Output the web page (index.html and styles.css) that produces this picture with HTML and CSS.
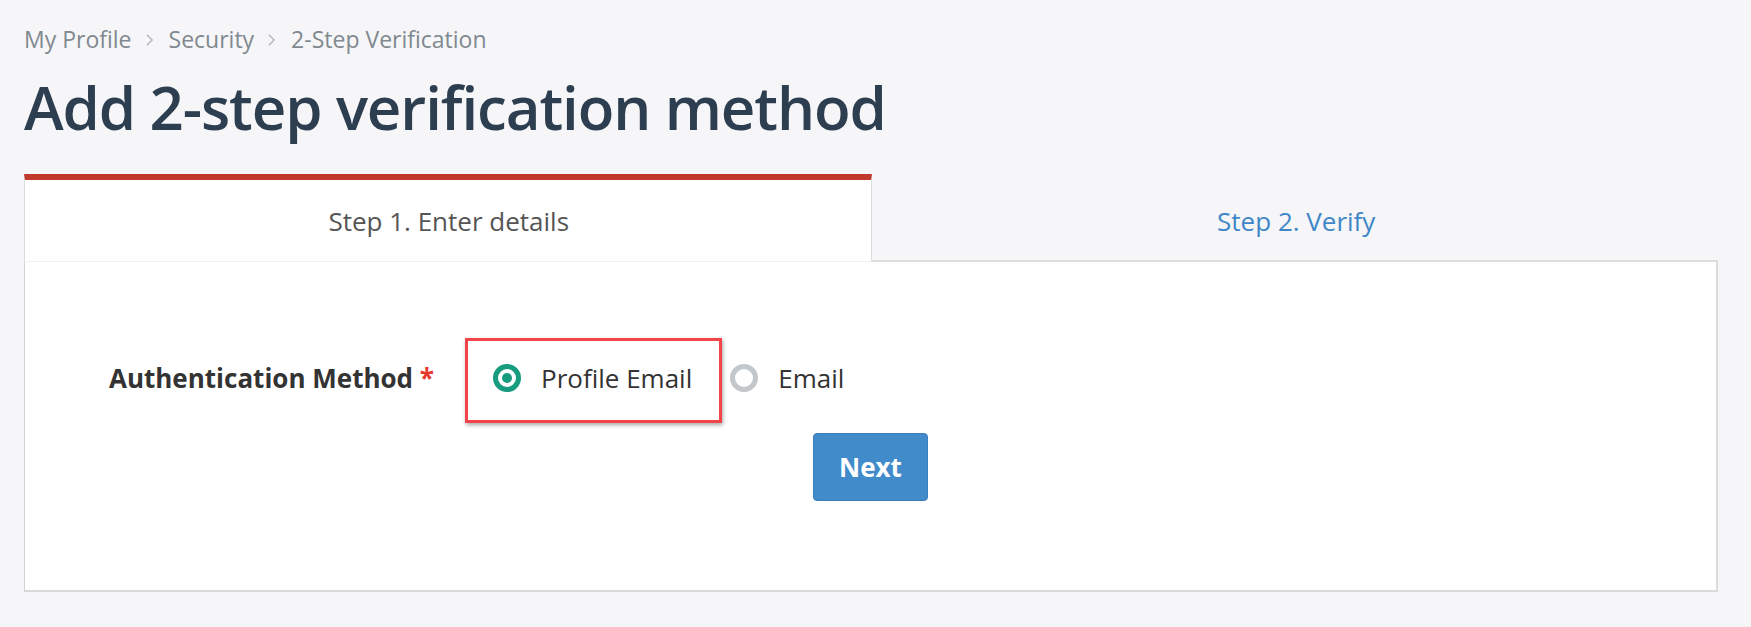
FILE: index.html
```html
<!DOCTYPE html>
<html lang="en">
<head>
<meta charset="utf-8">
<title>Add 2-step verification method</title>
<link rel="stylesheet" href="styles.css">
</head>
<body>
<div class="page">
  <nav class="crumbs">
    <span class="crumb">My Profile</span>
    <svg class="chev" viewBox="0 0 10 16" width="9" height="14"><path d="M2 2 L8 8 L2 14" fill="none" stroke="#b3b7ba" stroke-width="1.6"/></svg>
    <span class="crumb">Security</span>
    <svg class="chev" viewBox="0 0 10 16" width="9" height="14"><path d="M2 2 L8 8 L2 14" fill="none" stroke="#b3b7ba" stroke-width="1.6"/></svg>
    <span class="crumb">2-Step Verification</span>
  </nav>
  <h1 class="title">Add 2-step verification method</h1>

  <div class="wizard">
    <div class="tabs">
      <div class="tab tab-active">Step 1. Enter details</div>
      <div class="tab tab-next">Step 2. Verify</div>
    </div>
    <div class="panel">
      <div class="form-row">
        <div class="form-label">Authentication Method <span class="req">*</span></div>
        <div class="options">
          <label class="option option-highlight">
            <span class="radio radio-on"><span class="dot"></span></span>
            <span class="opt-text">Profile Email</span>
          </label>
          <label class="option">
            <span class="radio radio-off"></span>
            <span class="opt-text">Email</span>
          </label>
        </div>
      </div>
      <div class="actions">
        <button class="btn-next" type="button">Next</button>
      </div>
    </div>
  </div>
</div>
</body>
</html>
```

FILE: styles.css
```css
html, body {
  margin: 0;
  padding: 0;
  background: #f6f6f8;
}
body {
  font-family: "Open Sans", "Noto Sans", sans-serif;
  color: #333;
}
.page {
  padding: 23px 33px 0 24px;
}
.crumbs {
  display: flex;
  align-items: center;
  gap: 10px;
  height: 32px;
  font-size: 23px;
  line-height: 32px;
  color: #80898f;
}
.chev {
  display: block;
  margin: 2px 5px 0 3px;
}
.title {
  margin: 11px 0 0 0;
  font-size: 60px;
  font-weight: 600;
  line-height: 82px;
  letter-spacing: -1.1px;
  color: #2c3e50;
}
.wizard {
  margin-top: 26px;
}
.tabs {
  display: flex;
}
.tab {
  flex: 1;
  display: flex;
  align-items: center;
  justify-content: center;
  font-size: 26px;
  box-sizing: border-box;
}
.tab-active {
  background: #fff;
  border-top: 6px solid #c0392b;
  height: 88px;
  border-left: 1px solid #dcdcdc;
  border-right: 1px solid #dcdcdc;
  border-bottom: 1px solid #f0f0f0;
  color: #555;
  padding-left: 2px;
}
.tab-next {
  margin-top: 6px;
  height: 82px;
  color: #3f87c8;
  border-bottom: 2px solid #dcdcdc;
  padding-top: 1px;
  padding-left: 3px;
}
.panel {
  background: #fff;
  border-left: 1px solid #d4d4d4;
  border-right: 2px solid #dcdcdc;
  border-bottom: 2px solid #d9d9d9;
  height: 330px;
  box-sizing: border-box;
  padding-top: 98px;
}
.form-row {
  display: flex;
  align-items: center;
  height: 36px;
}
.form-label {
  width: 409px;
  text-align: right;
  font-size: 26px;
  font-weight: 700;
  line-height: 36px;
  color: #333;
  white-space: nowrap;
}
.req {
  color: #e8372c;
}
.options {
  display: flex;
  align-items: center;
  margin-left: 59px;
}
.option {
  display: flex;
  align-items: center;
  gap: 20px;
  font-size: 26px;
  line-height: 36px;
  color: #333;
  position: relative;
}
.option + .option {
  margin-left: 38px;
}
.option-highlight::after {
  content: "";
  position: absolute;
  left: -28px;
  right: -30px;
  top: -22px;
  bottom: -27px;
  border: 3px solid #f24449;
  box-shadow: 1px 2px 4px rgba(0,0,0,0.35);
  pointer-events: none;
}
.radio {
  flex: none;
  width: 28px;
  height: 28px;
  border-radius: 50%;
  box-sizing: border-box;
  display: flex;
  align-items: center;
  justify-content: center;
  background: #fff;
}
.radio-on {
  border: 5px solid #179c80;
}
.dot {
  width: 10px;
  height: 10px;
  border-radius: 50%;
  background: #179c80;
}
.radio-off {
  border: 5px solid #c2c7cc;
}
.actions {
  display: flex;
  justify-content: center;
  margin-top: 37px;
}
.btn-next {
  font-family: "Open Sans", "Noto Sans", sans-serif;
  font-size: 26px;
  font-weight: 700;
  color: #fff;
  background: #428bca;
  border: 1px solid #3a7dbb;
  border-radius: 4px;
  width: 115px;
  height: 68px;
  padding: 0;
  cursor: pointer;
}
```
